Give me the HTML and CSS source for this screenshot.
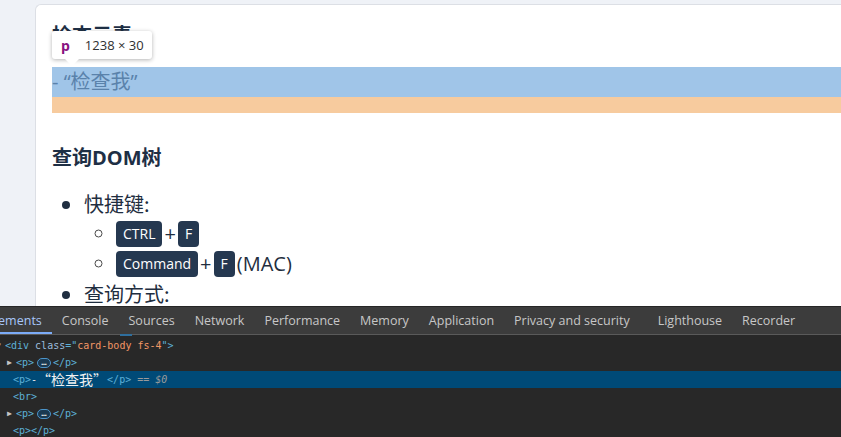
FILE: index.html
```html
<!DOCTYPE html>
<html lang="zh-CN">
<head>
<meta charset="utf-8">
<title>检查元素</title>
<link rel="stylesheet" href="styles.css">
</head>
<body>
<div class="viewport">
  <div class="page">
    <div class="card">
      <div class="card-body">
        <p class="title">检查元素</p>
        <p class="inspected">- “检查我”</p>
        <br>
        <p class="title">查询DOM树</p>
        <ul class="list">
          <li>快捷键:
            <ul class="sub">
              <li><kbd>CTRL</kbd><span class="plus">+</span><kbd>F</kbd></li>
              <li><kbd>Command</kbd><span class="plus">+</span><kbd>F</kbd><span class="mac">(MAC)</span></li>
            </ul>
          </li>
          <li>查询方式:</li>
        </ul>
      </div>
    </div>
    <div class="tooltip"><span class="tag">p</span><span class="dim">1238 × 30</span></div>
  </div>
  <div class="devtools">
    <div class="tabs">
      <span class="tab active">Elements</span>
      <span class="tab">Console</span>
      <span class="tab">Sources</span>
      <span class="tab">Network</span>
      <span class="tab">Performance</span>
      <span class="tab">Memory</span>
      <span class="tab">Application</span>
      <span class="tab wide">Privacy and security</span>
      <span class="tab">Lighthouse</span>
      <span class="tab">Recorder</span>
    </div>
    <div class="tree">
      <div class="row lvl0"><span class="tri open">▼</span><span class="t">&lt;div</span> <span class="an">class</span><span class="t">=&quot;</span><span class="av">card-body fs-4</span><span class="t">&quot;&gt;</span></div>
      <div class="row lvl1"><span class="tri">▶</span><span class="t">&lt;p&gt;</span><span class="dots">…</span><span class="t">&lt;/p&gt;</span></div>
      <div class="row lvl1 sel"><span class="t">&lt;p&gt;</span><span class="txt">-</span><span class="cjk">“检查我”</span><span class="t">&lt;/p&gt;</span><span class="eq">== $0</span></div>
      <div class="row lvl1"><span class="t">&lt;br&gt;</span></div>
      <div class="row lvl1"><span class="tri">▶</span><span class="t">&lt;p&gt;</span><span class="dots">…</span><span class="t">&lt;/p&gt;</span></div>
      <div class="row lvl1"><span class="t">&lt;p&gt;&lt;/p&gt;</span></div>
    </div>
  </div>
</div>
</body>
</html>
```

FILE: styles.css
```css
* { box-sizing: border-box; }
html, body { margin: 0; padding: 0; }
body {
  width: 841px;
  height: 437px;
  overflow: hidden;
  background: #eff2f7;
}
.viewport {
  display: flex;
  flex-direction: column;
  height: 437px;
}
.page {
  position: relative;
  height: 306px;
  flex: none;
  overflow: hidden;
  padding: 4px 0 0 35px;
}
.card {
  background: #fff;
  border: 1px solid #dcdfe5;
  border-right: none;
  border-radius: 6px 0 0 0;
  height: 400px;
}
.card-body {
  padding: 16px 0 0 16px;
  font-family: "Open Sans", "Noto Sans CJK SC", sans-serif;
  font-size: 20px;
  line-height: 30px;
  color: #1f2e40;
}
.card-body p { margin: 0; }
.title {
  font-family: "Open Sans", "Noto Sans CJK SC", sans-serif;
  font-size: 20px;
  font-weight: 700;
  margin-bottom: 16px !important;
  color: #1e2f45;
}
.inspected {
  background: #a0c5e8;
  border-bottom: 16px solid #f7cb9e;
  color: #5a82ab;
  font-family: "Open Sans", "Noto Sans CJK SC", sans-serif;
}
.list {
  margin: 0;
  padding-left: 32px;
}
.list > li { font-family: "Noto Sans CJK SC", sans-serif; }
.sub {
  margin: 0;
  padding-left: 32px;
  list-style: circle;
}
.sub li { font-family: "Open Sans", sans-serif; }
.sub li::marker { color: #4a4a4a; }
kbd {
  display: inline-block;
  vertical-align: top;
  margin-top: 2px;
  height: 26px;
  line-height: 26px;
  padding: 0 7px;
  background: #253850;
  color: #fff;
  border-radius: 4px;
  font-family: "Open Sans", sans-serif;
  font-size: 14px;
}
.plus { margin: 0 2px; }
.mac { margin-left: 2px; }

.tooltip {
  position: absolute;
  left: 52px;
  top: 31px;
  width: 100px;
  height: 28px;
  background: #fff;
  border-radius: 3px;
  box-shadow: 0 1px 4px rgba(0,0,0,0.3);
  display: flex;
  align-items: center;
  padding-left: 9px;
  font-family: "Open Sans", sans-serif;
  font-size: 13px;
  color: #303030;
}
.tooltip::after {
  content: "";
  position: absolute;
  left: 13px;
  bottom: -7px;
  border-left: 7px solid transparent;
  border-right: 7px solid transparent;
  border-top: 7px solid #fff;
}
.tooltip .tag { color: #881280; font-weight: 700; margin-right: 15px; font-size: 14px; }

.devtools {
  flex: 1;
  background: #282828;
  border-top: 1px solid #262626;
  font-family: "Open Sans", sans-serif;
}
.tabs {
  display: flex;
  height: 28px;
  background: #3c3c3c;
  border-bottom: 1px solid #5a5a5a;
  margin-left: -22px;
  position: relative;
}
.tabs::after {
  content: "";
  position: absolute;
  left: 142px;
  bottom: -2px;
  width: 12px;
  height: 2px;
  background: #2f6f9e;
}
.tab {
  padding: 0 10px;
  font-size: 12.5px;
  line-height: 27px;
  color: #c7c7c7;
  white-space: nowrap;
}
.tab.active {
  color: #a8c7fa;
  box-shadow: inset 0 -2px 0 #7cacf8;
}
.tab.wide { padding-right: 18px; }

.tree {
  padding-top: 2px;
  font-family: "DejaVu Sans Mono", monospace;
  font-size: 10px;
  color: #5db0d7;
}
.row {
  height: 17px;
  line-height: 17px;
  white-space: nowrap;
  display: flex;
  align-items: center;
}
.row.lvl0 { padding-left: 0; margin-left: -4px; }
.row.lvl1 { padding-left: 13px; }
.row.sel { background: #004a77; }
.tri {
  font-size: 8px;
  color: #c4c4c4;
  width: 9px;
  margin-left: -6px;
  margin-right: 0;
}
.tri.open { margin-left: 0; width: 9px; }
.t { color: #5db0d7; }
.an { color: #9bbbdc; margin-left: 6px; }
.av { color: #f29766; }
.txt { color: #ececec; }
.cjk { color: #f0f0f0; font-family: "Noto Sans CJK SC", sans-serif; font-size: 14px; }
.eq { color: #9a9a9a; font-style: italic; margin-left: 6px; }
.dots {
  display: inline-block;
  width: 14px;
  height: 10px;
  line-height: 6px;
  text-align: center;
  border: 1px solid #4c94c9;
  border-radius: 5px;
  background: #1b3a52;
  color: #fff;
  font-size: 9px;
  margin: 0 2px 0 3px;
}
```
